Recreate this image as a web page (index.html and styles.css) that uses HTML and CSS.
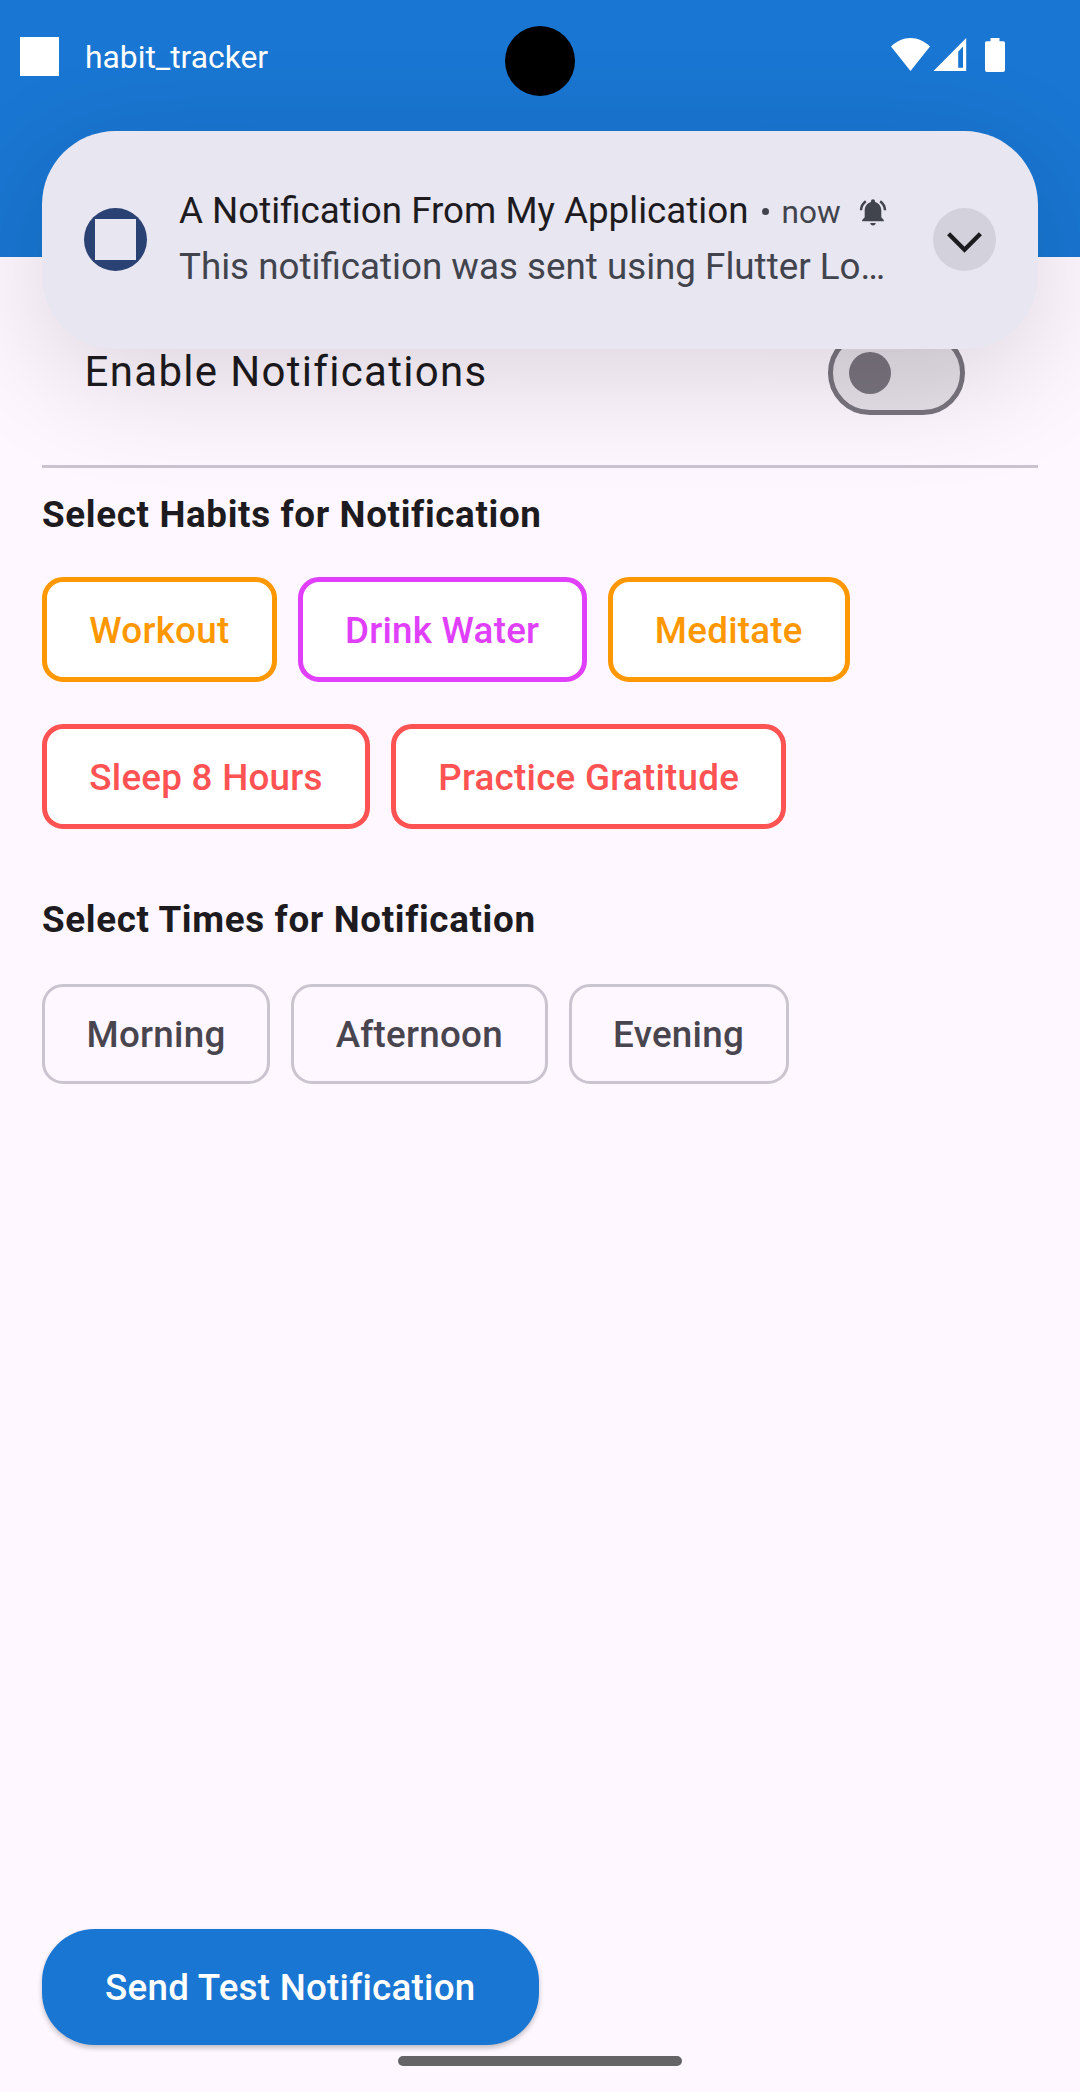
FILE: index.html
```html
<!DOCTYPE html>
<html lang="en">
<head>
<meta charset="utf-8">
<title>habit_tracker</title>
<link rel="stylesheet" href="styles.css">
</head>
<body>
<div class="screen">
  <header class="app-bar">
    <div class="status-bar">
      <span class="app-square"></span>
      <span class="app-name">habit_tracker</span>
      <svg class="status-icons" width="114" height="34" viewBox="0 0 114 34" fill="#fff">
        <path d="M0 8.6C5.6 3 12.3 0 19.5 0S33.400 3 39 8.600L19.500 33Z"/>
        <path fill-rule="evenodd" d="M75.200 0V33H42.500ZM72 8.600L67.200 13.800V29.800H72Z"/>
        <path d="M99.500 0H108.500V3.200H112.500Q114 3.200 114 5V32Q114 34 112 34H96Q94 34 94 32V5Q94 3.200 95.500 3.200H99.500Z"/>
      </svg>
    </div>
  </header>

  <main class="settings">
    <label class="switch-row">
      <span class="switch-label">Enable Notifications</span>
      <span class="switch"><span class="thumb"></span></span>
    </label>
    <hr class="divider">

    <h2 class="section-title">Select Habits for Notification</h2>
    <div class="chips habits">
      <button class="chip habit orange">Workout</button>
      <button class="chip habit purple">Drink Water</button>
      <button class="chip habit orange">Meditate</button>
      <button class="chip habit red">Sleep 8 Hours</button>
      <button class="chip habit red">Practice Gratitude</button>
    </div>

    <h2 class="section-title times-title">Select Times for Notification</h2>
    <div class="chips times">
      <button class="chip">Morning</button>
      <button class="chip">Afternoon</button>
      <button class="chip">Evening</button>
    </div>

    <button class="send">Send Test Notification</button>
  </main>

  <section class="notification">
    <span class="avatar"><span class="avatar-square"></span></span>
    <div class="message">
      <div class="message-head">
        <span class="title">A Notification From My Application</span>
        <span class="dot"></span>
        <span class="when">now</span>
        <svg class="bell" width="28" height="27" viewBox="0 0 28 27">
          <path fill="#41444d" d="M3.200 22.300V20.900L5.700 18.300V11.500C5.700 7.200 8.200 4 12 3V2.200C12 1 12.900 .2 14 .2S16 1 16 2.200V3C19.800 4 22.300 7.200 22.300 11.500V18.300L24.800 20.900V22.300Z"/>
          <path fill="#41444d" d="M11.300 24H16.700C16.700 25.500 15.500 26.500 14 26.500S11.300 25.500 11.300 24Z"/>
          <path fill="none" stroke="#41444d" stroke-width="2.500" d="M2 11.200C2.200 7.500 3.900 4.500 6.800 2.300M26 11.200C25.800 7.500 24.100 4.500 21.200 2.300"/>
        </svg>
      </div>
      <p class="body-text">This notification was sent using Flutter Lo…</p>
    </div>
    <button class="expand" aria-label="Expand">
      <svg width="35" height="21" viewBox="0 0 35 21"><path fill="none" stroke="#1b1b1f" stroke-width="4.400" d="M1.600 1.800L17.500 17.700L33.400 1.800"/></svg>
    </button>
  </section>

  <span class="camera"></span>
  <span class="nav-handle"></span>
</div>
</body>
</html>
```
FILE: styles.css
```css
* { box-sizing: border-box; }

body {
  margin: 0;
  font-family: Roboto, "Noto Sans", sans-serif;
  color: #1d1b20;
}

button {
  font: inherit;
  margin: 0;
  white-space: nowrap;
}

.screen {
  position: relative;
  width: 1080px;
  height: 2092px;
  overflow: hidden;
  background: #fef7ff;
  display: flex;
  flex-direction: column;
}

/* App bar and status bar */
.app-bar {
  height: 257px;
  flex: none;
  background: #1976d2;
}

.status-bar {
  display: flex;
  align-items: center;
  height: 113px;
  padding: 0 75px 0 20px;
  color: #fff;
}

.app-square {
  width: 39px;
  height: 39px;
  background: #fff;
}

.app-name {
  margin-left: 26px;
  padding-top: 1px;
  font-size: 31.800px;
  line-height: 39px;
}

.status-icons {
  margin-left: auto;
  margin-bottom: 3px;
}

/* Settings */
.settings {
  flex: 1;
  display: flex;
  flex-direction: column;
  align-items: flex-start;
  padding: 74px 42px 47px;
}

.switch-row {
  display: flex;
  justify-content: space-between;
  align-items: center;
  width: 100%;
  height: 84px;
  padding: 0 73.500px 0 42.600px;
  font-size: 42px;
  letter-spacing: 1.310px;
}

.switch-label { padding-bottom: 3px; }

.switch {
  display: flex;
  align-items: center;
  width: 136.500px;
  height: 84px;
  padding-left: 15.750px;
  border: 5.250px solid #79747e;
  border-radius: 42px;
  background: #e6e0e9;
}

.thumb {
  width: 42px;
  height: 42px;
  border-radius: 50%;
  background: #79747e;
}

.divider {
  width: 100%;
  height: 3px;
  margin: 50px 0 0;
  border: 0;
  background: #cac4d0;
}

.section-title {
  margin: 21px 0 0;
  font-size: 36.750px;
  line-height: 52px;
  font-weight: 700;
  letter-spacing: .660px;
}

.times-title { margin-top: 65px; }

.chips {
  display: flex;
  flex-wrap: wrap;
  gap: 42px 21px;
}

.habits { margin-top: 36px; }
.times { margin-top: 38px; }

.chip {
  height: 100px;
  padding: 0 41.600px;
  border: 3px solid #cac4d0;
  border-radius: 21px;
  background: transparent;
  color: #49454f;
  font-size: 36.750px;
  font-weight: 500;
  letter-spacing: .260px;
}

.habit {
  height: 105px;
  padding: 1px 42.250px 0;
  border: 5px solid currentColor;
  background: #fff;
}

.orange { color: #ff9800; }
.purple { color: #e040fb; }
.red { color: #ff5252; }

.send {
  height: 116px;
  margin-top: auto;
  padding: 0 63px;
  border: 0;
  border-radius: 52.500px;
  background: #1976d2;
  color: #fff;
  font-size: 36.750px;
  font-weight: 500;
  letter-spacing: .260px;
  box-shadow: 0 3px 5px rgba(0, 0, 0, .24);
}

/* Heads-up notification floating over the page */
.notification {
  position: absolute;
  left: 42px;
  top: 131px;
  width: 996px;
  height: 218px;
  display: flex;
  align-items: center;
  padding: 0 42px 2px;
  border-radius: 73.500px;
  background: #e8e6f0;
  box-shadow: 0 30px 120px rgba(0, 0, 0, .14);
}

.avatar, .expand {
  display: flex;
  align-items: center;
  justify-content: center;
  flex: none;
  width: 63px;
  height: 63px;
  border: 0;
  padding: 0;
  border-radius: 50%;
}

.avatar { background: #294173; }

.avatar-square {
  width: 41px;
  height: 41px;
  background: #e8e6f0;
}

.message {
  flex: 1;
  margin-left: 32px;
}

.message-head {
  display: flex;
  align-items: center;
  height: 56px;
}

.title {
  padding-bottom: 1px;
  font-size: 36.750px;
  white-space: nowrap;
}

.dot {
  width: 7px;
  height: 7px;
  margin: 1px 13px 0 13px;
  border-radius: 50%;
  background: #41444d;
}

.when {
  padding-top: 3px;
  font-size: 31.500px;
  color: #41444d;
}

.bell { margin-left: 18px; margin-top: 3px; }

.body-text {
  margin: 0;
  font-size: 36.750px;
  line-height: 56px;
  color: #41444d;
  white-space: nowrap;
}

.expand { background: #d3d1db; }

.expand svg { margin-top: 6px; }

.camera {
  position: absolute;
  left: 505px;
  top: 26px;
  width: 70px;
  height: 70px;
  border-radius: 50%;
  background: #000;
}

.nav-handle {
  position: absolute;
  left: 398px;
  top: 2056px;
  width: 284px;
  height: 10px;
  border-radius: 5px;
  background: #656366;
}
```
